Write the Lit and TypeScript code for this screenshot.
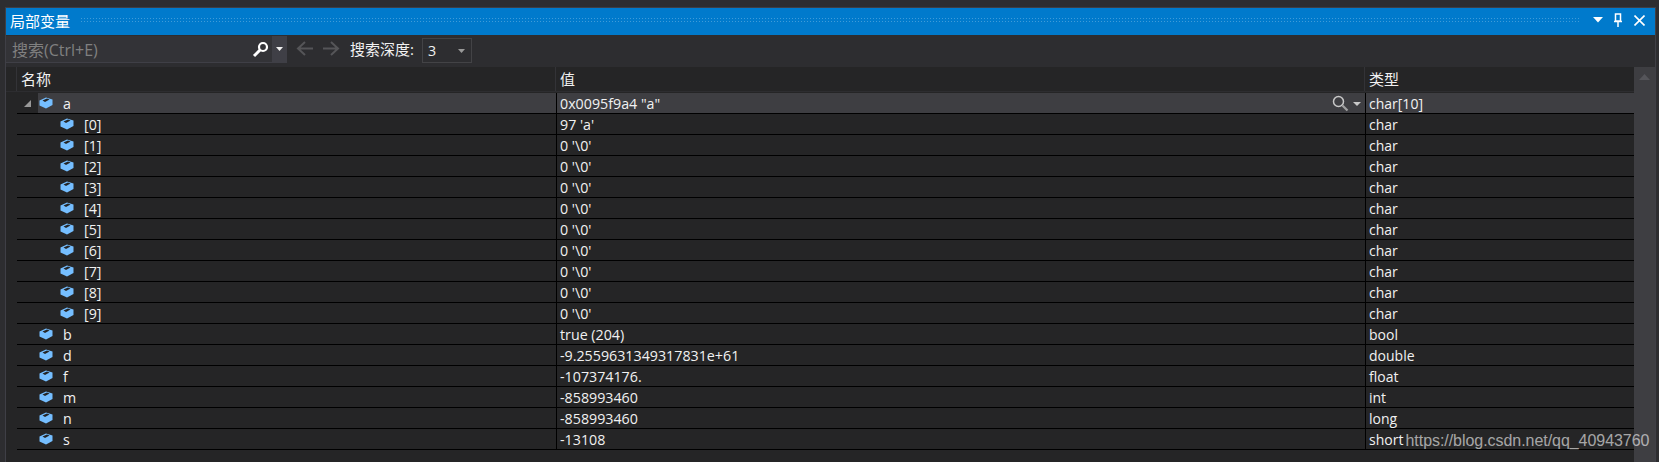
import { LitElement, html, css, svg } from 'lit';
import { customElement } from 'lit/decorators.js';

type Row = { name: string; value: string; type: string; depth: number; open?: boolean };

const rows: Row[] = [
  { name: 'a', value: '0x0095f9a4 "a"', type: 'char[10]', depth: 0, open: true },
  { name: '[0]', value: "97 'a'", type: 'char', depth: 1 },
  ...Array.from({ length: 9 }, (_, i) => ({ name: `[${i + 1}]`, value: "0 '\\0'", type: 'char', depth: 1 })),
  { name: 'b', value: 'true (204)', type: 'bool', depth: 0 },
  { name: 'd', value: '-9.2559631349317831e+61', type: 'double', depth: 0 },
  { name: 'f', value: '-107374176.', type: 'float', depth: 0 },
  { name: 'm', value: '-858993460', type: 'int', depth: 0 },
  { name: 'n', value: '-858993460', type: 'long', depth: 0 },
  { name: 's', value: '-13108', type: 'short', depth: 0 },
];

const cube = svg`<svg class="cube" width="14" height="12" viewBox="0 0 14 12">
  <path d="M7 .5 13.5 2.5V8L7 11.5 .5 8.5V3.5Z" fill="#75beff"/>
  <path d="M3.5 3.5 8 1.5 10.5 2.5 6 5Z" fill="#252526"/>
</svg>`;

@customElement('app-root')
export class AppRoot extends LitElement {
  static styles = css`
    :host {
      display: block;
      width: 1659px;
      height: 462px;
      background: #2d2d30;
      color: #f1f1f1;
      font-family: 'Open Sans', 'Noto Sans CJK SC', sans-serif;
      font-size: 14.25px;
      overflow: hidden;
      position: relative;
    }
    .window {
      margin: 7px 0 0 5px;
      width: 1651px;
      height: 455px;
      box-sizing: border-box;
      border: 1px solid #3f3f46;
      border-bottom: none;
    }
    .title {
      height: 27px;
      background: #007acc;
      display: flex;
      align-items: center;
      padding: 0 10px 0 4px;
      gap: 10px;
      color: #fff;
      box-sizing: border-box;
    }
    .title .text {
      font-family: 'Noto Sans CJK SC', sans-serif;
      font-size: 15px;
      padding-bottom: 3px;
    }
    .grip {
      flex: 1;
      height: 6px;
      margin: 0 2px 3px 0;
      background-image: radial-gradient(#3f9bd9 1px, transparent 1px);
      background-size: 3px 3px;
    }
    .title-btns {
      display: flex;
      align-items: center;
      gap: 10px;
      padding-bottom: 3px;
    }
    .title-btns svg:last-child {
      margin-left: 1px;
    }
    .toolbar {
      height: 32px;
      display: flex;
      align-items: flex-start;
      padding-top: 1px;
      box-sizing: border-box;
    }
    .search {
      width: 281px;
      height: 27px;
      background: #333337;
      display: flex;
      align-items: center;
      box-sizing: border-box;
      border-bottom: 1px solid #3f3f46;
    }
    .search .hint {
      flex: 1;
      padding-left: 6px;
      color: #808080;
      font-size: 16px;
    }
    .search .glass {
      margin-right: 3px;
      display: flex;
    }
    .search .drop {
      width: 15px;
      height: 27px;
      background: #3f3f46;
      display: flex;
      align-items: center;
      justify-content: center;
    }
    .nav {
      display: flex;
      margin: 5px 0 0 9px;
    }
    .depth-label {
      margin: 2px 0 0 10px;
      font-size: 15px;
      line-height: 22px;
      white-space: nowrap;
    }
    .depth {
      margin: 2px 0 0 8px;
      width: 50px;
      height: 25px;
      border: 1px solid #434346;
      box-sizing: border-box;
      display: flex;
      align-items: center;
      justify-content: space-between;
      padding: 0 6px 0 5px;
    }
    .grid {
      display: flex;
    }
    .table {
      width: 1628px;
      flex: none;
      background: #252526;
      height: 395px;
    }
    .head {
      display: grid;
      grid-template-columns: 10px 539px 809px 1fr;
      height: 24px;
      border-bottom: 1px solid #2d2d30;
      margin-bottom: 1px;
    }
    .head > div {
      border-left: 1px solid #333337;
      padding-left: 4px;
      line-height: 24px;
      font-family: 'Noto Sans CJK SC', sans-serif;
      font-size: 15px;
    }
    .head > div:first-child {
      border-left: none;
      padding: 0;
    }
    .row {
      display: grid;
      height: 21px;
      box-sizing: border-box;
      border-bottom: 1px solid #000;
      margin-left: 11px;
      grid-template-columns: 539px 809px 1fr;
      line-height: 21px;
    }
    .row > div {
      white-space: nowrap;
      overflow: hidden;
    }
    .name {
      display: flex;
      align-items: center;
    }
    .twist {
      width: 21px;
      flex: none;
      display: flex;
      justify-content: center;
    }
    .row.current .label,
    .row.current .value,
    .row.current .type {
      background: #3e3e42;
    }
    .label {
      flex: 1;
      display: flex;
      align-items: center;
      height: 100%;
    }
    .cube {
      margin: 0 10px 1px 1px;
      flex: none;
    }
    .value,
    .type {
      border-left: 1px solid #000;
      padding-left: 3px;
    }
    .type {
      font-size: 14px;
    }
    .value {
      display: flex;
      justify-content: space-between;
      align-items: center;
      padding-right: 3px;
    }
    .scrollbar {
      width: 21px;
      height: 395px;
      background: #3e3e42;
      display: flex;
      justify-content: center;
      padding-top: 7px;
      box-sizing: border-box;
    }
    .scrollbar svg {
      display: block;
    }
    .watermark {
      position: absolute;
      left: 1405.5px;
      top: 432px;
      font-family: 'Liberation Sans', sans-serif;
      font-size: 16px;
      letter-spacing: -0.05px;
      color: rgba(255, 255, 255, 0.6);
      white-space: nowrap;
    }
  `;

  private renderRow(r: Row) {
    return html`
      <div class="row ${r.open ? 'current' : ''}">
        <div class="name" style="padding-left: ${r.depth * 21}px">
          <div class="twist">
            ${r.open
              ? html`<svg width="7" height="7" viewBox="0 0 7 7"><path d="M7 0V7H0Z" fill="#999"/></svg>`
              : ''}
          </div>
          <div class="label">${cube}<span>${r.name}</span></div>
        </div>
        <div class="value">
          <span>${r.value}</span>
          ${r.open
            ? html`<svg width="30" height="17" viewBox="0 0 30 17">
                <circle cx="6.5" cy="6.5" r="5" fill="none" stroke="#c8c8c8" stroke-width="1.5"/>
                <path d="M10.5 10.5 15.5 15.5" stroke="#a0a0a0" stroke-width="2.2"/>
                <path d="M21 7h8l-4 4Z" fill="#c8c8c8"/>
              </svg>`
            : ''}
        </div>
        <div class="type">${r.type}</div>
      </div>
    `;
  }

  render() {
    return html`
      <div class="window">
        <div class="title">
          <span class="text">局部变量</span>
          <div class="grip"></div>
          <div class="title-btns">
            <svg width="10" height="6" viewBox="0 0 10 6"><path d="M0 0H10L5 5.5Z" fill="#fff"/></svg>
            <svg width="10" height="15" viewBox="0 0 10 15"><path d="M2.5 1h5v7h-5zM1 8.5h8M5 9v5" fill="none" stroke="#fff" stroke-width="1.5"/></svg>
            <svg width="11" height="11" viewBox="0 0 11 11"><path d="M.5.5 10.5 10.5M10.5.5 .5 10.5" stroke="#fff" stroke-width="1.6"/></svg>
          </div>
        </div>
        <div class="toolbar">
          <div class="search">
            <span class="hint">搜索(Ctrl+E)</span>
            <span class="glass">
              <svg width="17" height="17" viewBox="0 0 17 17">
                <circle cx="11" cy="6" r="4" fill="none" stroke="#fff" stroke-width="2.2"/>
                <path d="M8 9 2 15" stroke="#fff" stroke-width="3"/>
              </svg>
            </span>
            <span class="drop">
              <svg width="7" height="4" viewBox="0 0 7 4"><path d="M0 0H7L3.5 4Z" fill="#f1f1f1"/></svg>
            </span>
          </div>
          <div class="nav">
            <svg width="18" height="15" viewBox="0 0 18 15"><path d="M9 1 2 7.5 9 14M2 7.5H17" fill="none" stroke="#555558" stroke-width="2"/></svg>
            <svg width="18" height="15" viewBox="0 0 18 15" style="margin-left:8px"><path d="M9 1 16 7.5 9 14M16 7.5H1" fill="none" stroke="#555558" stroke-width="2"/></svg>
          </div>
          <span class="depth-label">搜索深度:</span>
          <div class="depth">
            <span>3</span>
            <svg width="7" height="4" viewBox="0 0 7 4"><path d="M0 0H7L3.5 4Z" fill="#999"/></svg>
          </div>
        </div>
        <div class="grid">
          <div class="table">
            <div class="head">
              <div></div>
              <div>名称</div>
              <div>值</div>
              <div>类型</div>
            </div>
            ${rows.map(r => this.renderRow(r))}
          </div>
          <div class="scrollbar">
            <svg width="11" height="6" viewBox="0 0 11 6"><path d="M0 6H11L5.5 0Z" fill="#55555a"/></svg>
          </div>
        </div>
      </div>
      <div class="watermark">https://blog.csdn.net/qq_40943760</div>
    `;
  }
}
